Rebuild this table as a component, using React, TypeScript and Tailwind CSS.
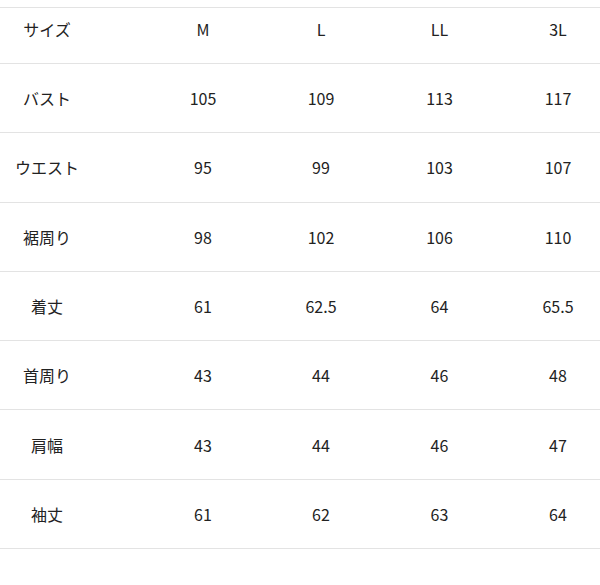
const head = ['サイズ', 'M', 'L', 'LL', '3L'];

const rows: string[][] = [
  ['バスト', '105', '109', '113', '117'],
  ['ウエスト', '95', '99', '103', '107'],
  ['裾周り', '98', '102', '106', '110'],
  ['着丈', '61', '62.5', '64', '65.5'],
  ['首周り', '43', '44', '46', '48'],
  ['肩幅', '43', '44', '46', '47'],
  ['袖丈', '61', '62', '63', '64'],
];

function Row({ cells, first }: { cells: string[]; first?: boolean }) {
  return (
    <div
      className={`grid grid-cols-[144px_118px_118px_119px_118px] items-center border-b border-[#e3e3e3] ${
        first ? 'h-[56px] pb-[13px]' : 'h-[69.3px]'
      }`}
    >
      {cells.map((c, i) => (
        <div key={i} className={`text-center ${i === 0 ? 'pr-[50px]' : ''}`}>
          {c}
        </div>
      ))}
    </div>
  );
}

export default function App() {
  return (
    <div
      className="w-[600px] h-[585px] overflow-hidden bg-white text-[16px] text-[#222]"
      style={{ fontFamily: '"Noto Sans CJK JP", "Noto Sans", sans-serif' }}
    >
      <div className="mt-[7px] border-t border-[#e3e3e3]">
        <Row cells={head} first />
        {rows.map(r => (
          <Row key={r[0]} cells={r} />
        ))}
      </div>
    </div>
  );
}
